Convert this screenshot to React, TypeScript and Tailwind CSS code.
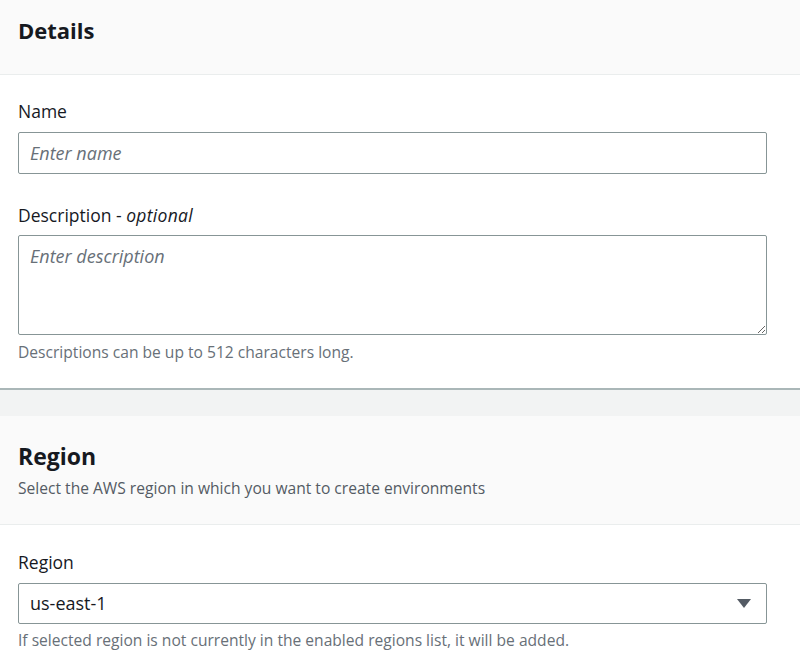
import React from 'react';

function Label({ children }: { children: React.ReactNode }) {
  return <div className="text-[17.5px] leading-[22px] text-[#16191f]">{children}</div>;
}

function Hint({ children }: { children: React.ReactNode }) {
  return <div className="text-[15.6px] leading-[20px] text-[#687078]">{children}</div>;
}

export default function App() {
  return (
    <div className="w-[800px] h-[659px] overflow-hidden bg-white text-[#16191f]" style={{ fontFamily: '"Open Sans", "Noto Sans", sans-serif' }}>
      {/* Details */}
      <div className="h-[75px] bg-[#fafafa] border-b border-[#eaeded] px-[18px] pt-[15px]">
        <h2 className="text-[22px] leading-[30px] font-bold">Details</h2>
      </div>
      <div className="px-[18px] pt-[25px] pb-[26px]">
        <Label>Name</Label>
        <div className="mt-[10px] h-[42px] w-[749px] border border-[#879596] rounded-[2px] flex items-center pl-[11px]">
          <input
            className="w-full outline-none bg-transparent text-[18px] italic placeholder:text-[#687078]"
            placeholder="Enter name"
          />
        </div>
        <div className="mt-[30px]">
          <Label>
            Description - <span className="italic tracking-[0.3px]">optional</span>
          </Label>
        </div>
        <textarea
          className="mt-[9px] block h-[100px] w-[749px] border border-[#879596] rounded-[2px] px-[11px] py-[7px] text-[18px] italic outline-none placeholder:text-[#687078]"
          placeholder="Enter description"
        />
        <div className="mt-[7px]">
          <Hint>Descriptions can be up to 512 characters long.</Hint>
        </div>
      </div>
      <div className="border-t-2 border-[#aab7b8] h-[28px] bg-[#f2f3f3]" />

      {/* Region */}
      <div className="h-[109px] bg-[#fafafa] border-b border-[#eaeded] px-[18px] pt-[25px]">
        <h2 className="text-[23px] leading-[30px] font-bold">Region</h2>
        <div className="mt-[7px]">
          <Hint>
            <span className="text-[#545b64]">Select the AWS region in which you want to create environments</span>
          </Hint>
        </div>
      </div>
      <div className="px-[18px] pt-[26px]">
        <Label>Region</Label>
        <div className="mt-[10px] h-[41px] w-[749px] border border-[#879596] rounded-[2px] flex items-center justify-between pl-[11px] pr-[15px]">
          <span className="text-[18px]">us-east-1</span>
          <svg width="14" height="10" viewBox="0 0 14 10">
            <path d="M0 0 H14 L7 9 Z" fill="#545b64" />
          </svg>
        </div>
        <div className="mt-[6px]">
          <Hint>If selected region is not currently in the enabled regions list, it will be added.</Hint>
        </div>
      </div>
    </div>
  );
}
